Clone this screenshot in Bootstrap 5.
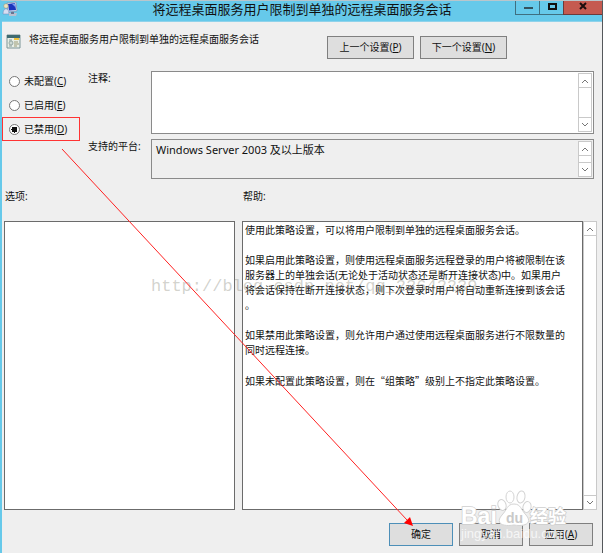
<!DOCTYPE html>
<html lang="zh-CN">
<head>
<meta charset="utf-8">
<meta name="viewport" content="width=device-width, initial-scale=1">
<title>将远程桌面服务用户限制到单独的远程桌面服务会话</title>
<link href="https://cdn.jsdelivr.net/npm/bootstrap@5.3.0/dist/css/bootstrap.min.css" rel="stylesheet">
<style>
body { font-family: "Noto Sans", "Noto Sans CJK SC", sans-serif; font-size: 10px; line-height: 15px; color: #111; background: #efefef; }
.policy-window { border-left: 2px solid #66c9ea; border-right: 1px solid #55585b; border-top: 1px solid #b9c6cc; }
.title-bar { background: #66c9ea; height: 21px; border-bottom: 1px solid #8fd2ea; }
.title-bar h1 { font-size: 13px; line-height: 16px; font-weight: 400; }
.sys-icon { left: 0; top: 0; }
.caption-buttons { right: 0; top: 0; height: 14px; }
.caption-buttons button { width: 24px; padding: 0; border: solid #3f6f80; border-width: 0 0 1px 1px; background: transparent; line-height: 0; }
.caption-buttons .close-window { width: 39px; background: #c55a50; border-color: #6d3a3a; }
.setting-head { padding: 10px 95px 0 4px; height: 47px; }
.setting-name svg { margin-top: 2px; }
.dlg-btn { border: 1px solid #7f7f7f; border-radius: 0; background: #dedede; color: #111; font-size: 10px; line-height: 15px; padding: 3px 2px; height: 23px; }
.dlg-btn:hover { background: #e6eef3; color: #111; }
.nav-group { gap: 6px; }
.nav-btn { width: 87px; }
.end-btn { width: 64px; }
.default-btn { border-color: #4d8fb8; }
.states { width: 81px; }
.state-row { height: 24px; padding-left: 6px; gap: 4px; margin-right: 3px; border: 1px solid transparent; }
.state-row.picked { border-color: #f33; }
.state-row .form-check-input { width: 11px; height: 11px; margin: 0; border: 1px solid #777; background-color: #fff; background-image: none; box-shadow: none; }
.state-row .form-check-input:checked { background-image: radial-gradient(circle, #111 0 3px, #fff 3px); }
.fields { gap: 5px; padding: 2px 8px 0 0; }
.field-label { width: 68px; padding-left: 5px; }
.field { border: 1px solid #8a8a8a; background: #fff; padding: 1px; }
.field textarea { border: 0; resize: none; outline: 0; background: transparent; padding: 1px 3px; font-size: 11px; line-height: 16px; overflow: hidden; color: #111; }
.field-note { height: 63px; }
.field-platform { height: 40px; background: #efefef; }
.scroller { width: 14px; background: #fff; border: 1px solid #c9c9c9; flex: none; }
.scroller button { height: 14px; border: 0; padding: 0; background: #fff; line-height: 0; }
.scroller button:first-child { border-bottom: 1px solid #c9c9c9; }
.scroller button:last-child { border-top: 1px solid #c9c9c9; }
.panels { padding: 10px 5px 0 2px; gap: 7px; }
.option-side { flex: 231 1 0; }
.help-side { flex: 355 1 0; }
.panel-label { padding: 0 1px; height: 32px; }
.pane { border: 1px solid #6b6b6b; background: #fff; }
.help-text p { margin-bottom: 15px; }
.help-text { padding: 1px 2px; }
.wide-quote { font-family: "Noto Sans CJK SC", sans-serif; }
.foot { padding: 13px 9px 7px 0; gap: 6px; }
.overlay-layer { left: 0; top: 0; pointer-events: none; }
.blog-tag { left: 149px; top: 276px; font: 17px/20px "Liberation Mono", monospace; color: rgba(130,130,115,.36); pointer-events: none; }
.brand-tag { right: 32px; bottom: 7px; width: 110px; height: 58px; pointer-events: none; }
</style>
<script src="https://cdn.jsdelivr.net/npm/bootstrap@5.3.0/dist/js/bootstrap.bundle.min.js"></script>
</head>
<body>
<main class="policy-window position-relative d-flex flex-column min-vh-100">
  <header class="title-bar position-relative text-center">
    <svg class="sys-icon position-absolute" width="18" height="17" viewBox="0 0 18 17" aria-hidden="true">
      <path d="M5 2l9-1 1 9-9 1z" fill="#dfe7f3" stroke="#7e8eae" stroke-width=".7"/>
      <path d="M6 3l7-1 1 7-7 .6z" fill="#1c35bd"/><path d="M10 3l3-.5.7 4z" fill="#7d9cf0"/>
      <circle cx="4" cy="5" r="2.3" fill="#ece3bf" stroke="#9b8e73" stroke-width=".5"/>
      <path d="M1 13c0-7 6-7 6 0z" fill="#d8def1" stroke="#7186b9" stroke-width=".5"/>
      <path d="M7 12h8l-1 3H7z" fill="#b9c0d1"/><path d="M9 11h3v2H9z" fill="#6a7390"/>
    </svg>
    <h1 class="m-0">将远程桌面服务用户限制到单独的远程桌面服务会话</h1>
    <div class="caption-buttons position-absolute d-flex">
      <button type="button" aria-label="最小化"><svg width="22" height="12"><path d="M7 6h9" stroke="#34525e" stroke-width="2"/></svg></button>
      <button type="button" aria-label="最大化"><svg width="22" height="12"><path d="M8 2h7v5H8z" fill="none" stroke="#111" stroke-width="2"/></svg></button>
      <button class="close-window" type="button" aria-label="关闭"><svg width="30" height="12"><path d="M12 1l6 6M18 1l-6 6" stroke="#1b0d0d" stroke-width="2"/></svg></button>
    </div>
  </header>

  <section class="setting-head d-flex justify-content-between">
    <div class="setting-name d-flex gap-1">
      <svg class="me-1" width="15" height="15" viewBox="0 0 15 15" aria-hidden="true">
        <path d="M1 1h13v13H1z" fill="#e8eee6" stroke="#7d9597"/><path d="M1 1h13v3H1z" fill="#3f6a70"/>
        <path d="M8 4h5v2H8z" fill="#f0c23a"/><path d="M3 6h3M3 12h3" stroke="#879b99"/>
        <circle cx="5" cy="9" r="2" fill="#cdd9d3" stroke="#7b918f" stroke-width=".7"/><path d="M8 8h4M8 10h5M8 12h3" stroke="#9b9b76"/>
      </svg>
      <span>将远程桌面服务用户限制到单独的远程桌面服务会话</span>
    </div>
    <div class="nav-group d-flex align-items-start pt-1">
      <button class="btn dlg-btn nav-btn" type="button">上一个设置(<u>P</u>)</button>
      <button class="btn dlg-btn nav-btn" type="button">下一个设置(<u>N</u>)</button>
    </div>
  </section>

  <section class="d-flex">
    <div class="states d-flex flex-column flex-shrink-0">
      <div class="state-row d-flex align-items-center"><input class="form-check-input" type="radio" name="state" id="stateC"><label for="stateC">未配置(<u>C</u>)</label></div>
      <div class="state-row d-flex align-items-center"><input class="form-check-input" type="radio" name="state" id="stateE"><label for="stateE">已启用(<u>E</u>)</label></div>
      <div class="state-row picked d-flex align-items-center"><input class="form-check-input" type="radio" name="state" id="stateD" checked><label for="stateD">已禁用(<u>D</u>)</label></div>
    </div>
    <div class="fields flex-grow-1 d-flex flex-column">
      <div class="d-flex">
        <label class="field-label flex-shrink-0" for="note">注释:</label>
        <div class="field field-note d-flex flex-grow-1">
          <textarea class="w-100" id="note"></textarea>
          <div class="scroller d-flex flex-column justify-content-between">
            <button type="button" aria-label="向上滚动"><svg width="10" height="10"><path d="M2 7l3-3 3 3" fill="none" stroke="#777"/></svg></button>
            <button type="button" aria-label="向下滚动"><svg width="10" height="10"><path d="M2 3l3 3 3-3" fill="none" stroke="#777"/></svg></button>
          </div>
        </div>
      </div>
      <div class="d-flex">
        <label class="field-label flex-shrink-0" for="platform">支持的平台:</label>
        <div class="field field-platform d-flex flex-grow-1">
          <textarea class="w-100" id="platform" readonly>Windows Server 2003 及以上版本</textarea>
          <div class="scroller d-flex flex-column justify-content-between">
            <button type="button" aria-label="向上滚动"><svg width="10" height="10"><path d="M2 7l3-3 3 3" fill="none" stroke="#777"/></svg></button>
            <button type="button" aria-label="向下滚动"><svg width="10" height="10"><path d="M2 3l3 3 3-3" fill="none" stroke="#777"/></svg></button>
          </div>
        </div>
      </div>
    </div>
  </section>

  <section class="panels d-flex flex-grow-1">
    <div class="option-side d-flex flex-column">
      <div class="panel-label">选项:</div>
      <div class="pane flex-grow-1"></div>
    </div>
    <div class="help-side d-flex flex-column">
      <div class="panel-label">帮助:</div>
      <div class="d-flex flex-grow-1">
        <div class="pane help-text flex-grow-1">
          <p>使用此策略设置，可以将用户限制到单独的远程桌面服务会话。</p>
          <p>如果启用此策略设置，则使用远程桌面服务远程登录的用户将被限制在该<br>服务器上的单独会话(无论处于活动状态还是断开连接状态)中。如果用户<br>将会话保持在断开连接状态，则下次登录时用户将自动重新连接到该会话<br>。</p>
          <p>如果禁用此策略设置，则允许用户通过使用远程桌面服务进行不限数量的<br>同时远程连接。</p>
          <p class="mb-0">如果未配置此策略设置，则在<span class="wide-quote">“组策略”</span>级别上不指定此策略设置。</p>
        </div>
        <div class="scroller d-flex flex-column justify-content-between">
          <button type="button" aria-label="向上滚动"><svg width="10" height="10"><path d="M2 7l3-3 3 3" fill="none" stroke="#777"/></svg></button>
          <button type="button" aria-label="向下滚动"><svg width="10" height="10"><path d="M2 3l3 3 3-3" fill="none" stroke="#777"/></svg></button>
        </div>
      </div>
    </div>
  </section>

  <footer class="foot d-flex justify-content-end">
    <button class="btn dlg-btn end-btn default-btn" type="button">确定</button>
    <button class="btn dlg-btn end-btn" type="button">取消</button>
    <button class="btn dlg-btn end-btn" type="button">应用(<u>A</u>)</button>
  </footer>

  <div class="blog-tag position-absolute">http://blog.csdn.net/qq_22642239</div>
  <svg class="brand-tag position-absolute" viewBox="0 0 110 58" role="img" aria-label="Baidu 经验">
    <g fill="#fff" stroke="#d4d4d4">
      <ellipse cx="42" cy="17" rx="4" ry="5.5" transform="rotate(-18 42 17)"/>
      <ellipse cx="50" cy="9" rx="4" ry="6"/>
      <ellipse cx="61" cy="9" rx="4" ry="6" transform="rotate(10 61 9)"/>
      <ellipse cx="67" cy="19" rx="4" ry="5.5" transform="rotate(12 67 19)"/>
      <path d="M54 16c7 0 7 6 12 11 7 8-1 12-12 10-12 2-19-2-12-10 5-5 5-11 12-11z"/>
    </g>
    <g fill="#fff" stroke="#cfcfcf" stroke-width="1.5" paint-order="stroke" font-weight="700">
      <text x="1" y="36" font-family="Liberation Sans, sans-serif" font-size="23">Bai</text>
      <text x="70" y="35" font-family="Noto Sans CJK SC, sans-serif" font-size="18">经验</text>
    </g>
    <text x="46" y="35" fill="#c9c9c9" font-family="Liberation Sans, sans-serif" font-weight="700" font-size="14">du</text>
    <text x="1" y="50" fill="#fff" fill-opacity=".75" font-family="Liberation Sans, sans-serif" font-size="13">jingyan.baidu.com</text>
  </svg>
  <svg class="overlay-layer position-absolute" width="430" height="540" aria-hidden="true">
    <path d="M60 148L405 519" stroke="#f22" stroke-width="1"/>
    <path d="M411 525l-9-3 6-6z" fill="#f00"/>
  </svg>
</main>
</body>
</html>
